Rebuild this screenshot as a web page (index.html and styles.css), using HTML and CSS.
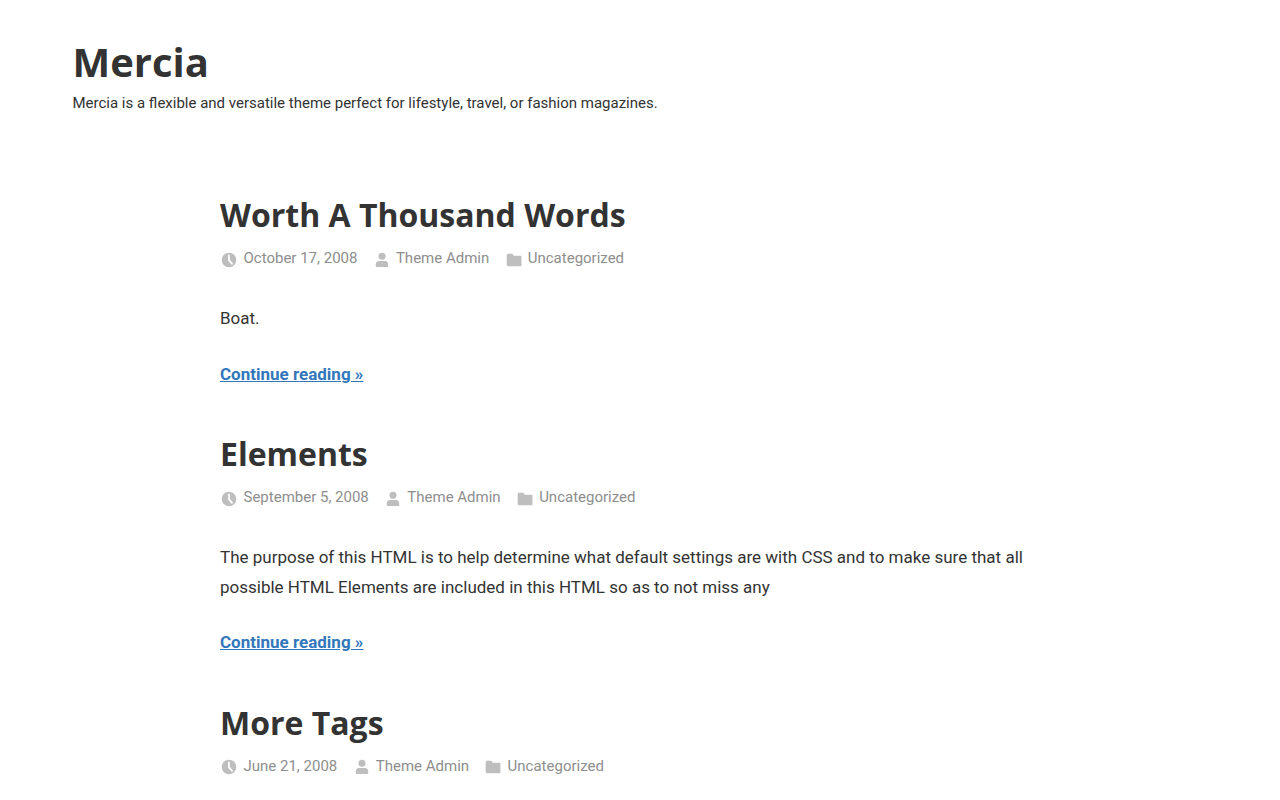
FILE: index.html
```html
<!DOCTYPE html>
<html lang="en-US">
<head>
    <meta charset="UTF-8">
    <meta name="viewport" content="width=device-width, initial-scale=1">
    <title>Mercia</title>
    <link rel="stylesheet" href="styles.css">
</head>
<body>
    <svg class="icon-defs" xmlns="http://www.w3.org/2000/svg">
        <symbol id="icon-clock" viewBox="0 0 18 18">
            <path fill-rule="evenodd" d="M9 1.700a7.300 7.300 0 1 1 0 14.600 7.300 7.300 0 0 1 0-14.600zM8.100 4.200v5.100q0 .4.3.700l3.500 3.900 1.200-1.200-3.300-3.900V4.200q0-.7-.85-.7t-.85.7z"/>
        </symbol>
        <symbol id="icon-user" viewBox="0 0 18 18">
            <circle cx="9" cy="5.200" r="3.500"/>
            <path d="M3 16q-.2 0-.2-.8v-1.700Q2.800 10 6.200 10h5.600q3.400 0 3.400 3.500v1.700q0 .8-.2.800z"/>
        </symbol>
        <symbol id="icon-folder" viewBox="0 0 18 18">
            <path d="M1.700 3.800q0-1 1-1H7q.7 0 1 .6l.7 1.300h6.700q1 0 1 1v8.500q0 1-1 1H2.700q-1 0-1-1z"/>
        </symbol>
    </svg>

    <header class="site-header">
        <p class="site-title">Mercia</p>
        <p class="site-description">Mercia is a flexible and versatile theme perfect for lifestyle, travel, or fashion magazines.</p>
    </header>

    <main class="site-main">
        <article class="post">
            <h2 class="entry-title">Worth A Thousand Words</h2>
            <div class="entry-meta">
                <span class="meta-item"><svg class="icon"><use href="#icon-clock"/></svg>October 17, 2008</span>
                <span class="meta-item"><svg class="icon"><use href="#icon-user"/></svg>Theme Admin</span>
                <span class="meta-item"><svg class="icon"><use href="#icon-folder"/></svg>Uncategorized</span>
            </div>
            <div class="entry-content">
                <p>Boat.</p>
                <a class="more-link" href="#">Continue reading »</a>
            </div>
        </article>

        <article class="post">
            <h2 class="entry-title">Elements</h2>
            <div class="entry-meta">
                <span class="meta-item"><svg class="icon"><use href="#icon-clock"/></svg>September 5, 2008</span>
                <span class="meta-item"><svg class="icon"><use href="#icon-user"/></svg>Theme Admin</span>
                <span class="meta-item"><svg class="icon"><use href="#icon-folder"/></svg>Uncategorized</span>
            </div>
            <div class="entry-content">
                <p>The purpose of this HTML is to help determine what default settings are with CSS and to make sure that all possible HTML Elements are included in this HTML so as to not miss any</p>
                <a class="more-link" href="#">Continue reading »</a>
            </div>
        </article>

        <article class="post">
            <h2 class="entry-title">More Tags</h2>
            <div class="entry-meta">
                <span class="meta-item"><svg class="icon"><use href="#icon-clock"/></svg>June 21, 2008</span>
                <span class="meta-item"><svg class="icon"><use href="#icon-user"/></svg>Theme Admin</span>
                <span class="meta-item"><svg class="icon"><use href="#icon-folder"/></svg>Uncategorized</span>
            </div>
        </article>
    </main>
</body>
</html>
```
FILE: styles.css
```css
* {
    box-sizing: border-box;
}
html {
    height: 100%;
    overflow: hidden;
}
body {
    height: 100%;
    margin: 0;
    overflow: hidden;
    background: #fff;
    color: #333;
    font-family: Roboto, sans-serif;
    font-size: 17px;
    line-height: 1.75;
}
p {
    margin: 0;
}
.icon-defs {
    display: none;
}
.site-header {
    max-width: 1135px;
    margin: 0 auto;
    padding-top: 34px;
}
.site-title {
    font-family: "Open Sans", sans-serif;
    font-size: 40px;
    font-weight: 700;
    line-height: 56px;
}
.site-description {
    margin-top: 1px;
    font-size: 15px;
    line-height: 24px;
}
.site-main {
    width: 840px;
    margin: 0 auto;
    padding-top: 77px;
}
.post {
    margin-bottom: 41.625px;
}
.entry-title {
    margin: 0;
    font-family: "Open Sans", sans-serif;
    font-size: 32px;
    font-weight: 700;
    line-height: 45px;
}
.entry-meta {
    display: flex;
    gap: 15px;
    margin-top: 8px;
    color: #8e8e8e;
    font-size: 15px;
    line-height: 26px;
}
.meta-item {
    display: flex;
}
.icon {
    width: 18px;
    height: 18px;
    margin: 5.5px 5.25px 0 0.25px;
    fill: #bebebe;
}
.entry-content {
    padding-top: 33px;
}
.more-link {
    display: inline-block;
    margin-top: 25.875px;
    color: #3377bb;
    font-weight: 700;
}
```
